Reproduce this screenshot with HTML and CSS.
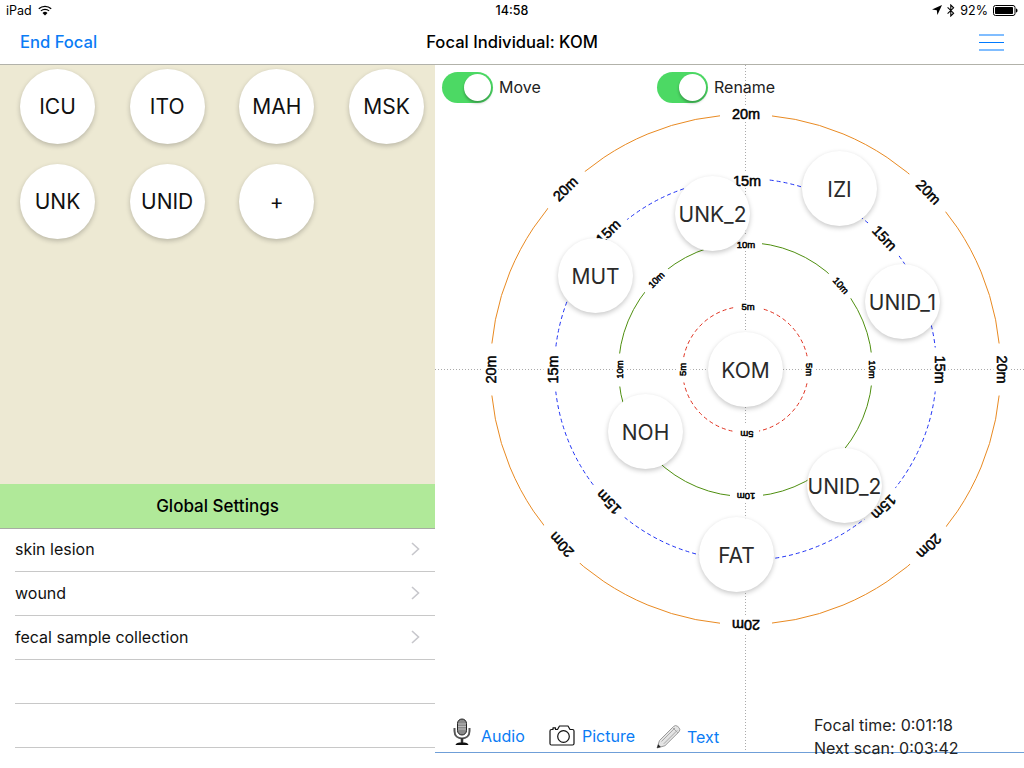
FILE: index.html
```html
<!DOCTYPE html>
<html>
<head>
  <title>Focal Individual</title>
  <meta charset="utf-8">
  <link rel="stylesheet" href="styles.css">
</head>
<body>
<div id="page">
  <!-- status bar -->
  <div class="statusbar">
    <div class="status-left">
      <span>iPad</span>
      <svg class="wifi" width="14" height="11" viewBox="0 0 14 11">
        <path d="M0.8 3.8 A9 9 0 0 1 13.2 3.8 M2.9 5.9 A6 6 0 0 1 11.1 5.9" fill="none" stroke="#000" stroke-width="1.300"/>
        <path d="M7 10.5 L4.500 7.900 A3.600 3.600 0 0 1 9.500 7.900 Z" fill="#000"/>
      </svg>
    </div>
    <div class="status-time">14:58</div>
    <div class="status-right">
      <svg width="10" height="10" viewBox="0 0 10 10"><path d="M10 0 L0 4.6 L4.8 5.2 L5.4 10 Z" fill="#000"/></svg>
      <svg width="8" height="13" viewBox="0 0 8 13"><path d="M0.6 3.4 L6.6 9.2 L3.8 12 L3.8 1 L6.6 3.8 L0.6 9.6" fill="none" stroke="#000" stroke-width="1.1"/></svg>
      <span>92%</span>
      <svg width="25" height="11" viewBox="0 0 25 11">
        <rect x="0.5" y="0.5" width="21.5" height="10" rx="2" fill="none" stroke="#000"/>
        <rect x="2" y="2" width="18" height="7" rx="0.8" fill="#000"/>
        <path d="M23 3.6 C24.2 3.8 24.5 4.6 24.5 5.5 C24.5 6.4 24.2 7.2 23 7.4 Z" fill="#000"/>
      </svg>
    </div>
  </div>

  <!-- nav bar -->
  <div class="navbar">
    <a class="nav-back">End Focal</a>
    <div class="nav-title">Focal Individual: KOM</div>
    <div class="hamburger"><i class="bar-light"></i><i class="bar-mid"></i><i class="bar-light"></i></div>
  </div>

  <div class="main">
    <div class="left">
      <div class="roster">
        <div class="bubble">ICU</div>
        <div class="bubble">ITO</div>
        <div class="bubble">MAH</div>
        <div class="bubble">MSK</div>
        <div class="bubble">UNK</div>
        <div class="bubble">UNID</div>
        <div class="bubble">+</div>
      </div>
      <div class="settings-head">Global Settings</div>
      <div class="settings-list">
        <div class="row"><span>skin lesion</span><svg class="chev" width="9" height="14" viewBox="0 0 9 14"><path d="M1 1 L7.5 7 L1 13" fill="none" stroke="#c7c7cc" stroke-width="1.6"/></svg></div>
        <div class="row"><span>wound</span><svg class="chev" width="9" height="14" viewBox="0 0 9 14"><path d="M1 1 L7.5 7 L1 13" fill="none" stroke="#c7c7cc" stroke-width="1.6"/></svg></div>
        <div class="row"><span>fecal sample collection</span><svg class="chev" width="9" height="14" viewBox="0 0 9 14"><path d="M1 1 L7.5 7 L1 13" fill="none" stroke="#c7c7cc" stroke-width="1.6"/></svg></div>
        <div class="row"></div>
        <div class="row"></div>
      </div>
    </div>

    <div class="right">
      <!-- distance rings -->
      <svg class="rings" width="589" height="687" viewBox="435 65 589 687">
        <line class="axis" x1="435" y1="369.5" x2="1024" y2="369.5"/>
        <line class="axis" x1="745.5" y1="65" x2="745.5" y2="752"/>

        <circle class="ring r20" cx="745.5" cy="369.5" r="255"/>
        <circle class="ring r15" cx="745.5" cy="369.5" r="191"/>
        <circle class="ring r10" cx="745.5" cy="369.5" r="127"/>
        <circle class="ring r5" cx="745.5" cy="369.5" r="63"/>

        <g class="tick big">
          <g transform="rotate(0 746 369.5)"><rect x="720" y="106" width="52" height="16"/><text x="746" y="119">20m</text></g>
          <g transform="rotate(45.800 746 369.5)"><rect x="720" y="106" width="52" height="16"/><text x="746" y="120">20m</text></g>
          <g transform="rotate(90 746 369.5)"><rect x="720" y="106" width="52" height="16"/><text x="746" y="119">20m</text></g>
          <g transform="rotate(134 746 369.5)"><rect x="720" y="106" width="52" height="16"/><text x="746" y="120">20m</text></g>
          <g transform="rotate(180 746 369.5)"><rect x="720" y="106" width="52" height="16"/><text x="746" y="119">20m</text></g>
          <g transform="rotate(226.500 746 369.5)"><rect x="720" y="106" width="52" height="16"/><text x="746" y="120">20m</text></g>
          <g transform="rotate(270 746 369.5)"><rect x="720" y="106" width="52" height="16"/><text x="746" y="119">20m</text></g>
          <g transform="rotate(315 746 369.5)"><rect x="720" y="106" width="52" height="16"/><text x="746" y="119">20m</text></g>
        </g>
        <g class="tick big">
          <g transform="rotate(0 746 369.5)"><rect x="724" y="171" width="44" height="16"/><text x="747" y="186">15m</text></g>
          <g transform="rotate(46.500 746 369.5)"><rect x="724" y="169" width="44" height="16"/><text x="746" y="183.500">15m</text></g>
          <g transform="rotate(90 746 369.5)"><rect x="724" y="167" width="44" height="16"/><text x="746" y="180.500">15m</text></g>
          <g transform="rotate(135 746 369.5)"><rect x="724" y="167" width="44" height="16"/></g>
          <g transform="rotate(226 746 369.5)"><rect x="724" y="169" width="44" height="16"/><text x="746" y="183.500">15m</text></g>
          <g transform="rotate(270 746 369.5)"><rect x="724" y="167" width="44" height="16"/><text x="746" y="181.500">15m</text></g>
          <g transform="rotate(315 746 369.5)"><rect x="724" y="166" width="44" height="16"/><text x="746" y="179.500">15m</text></g>
        </g>
        <g class="tick small">
          <g transform="rotate(0 746 369.5)"><rect x="729" y="236" width="33" height="14"/><text x="746" y="247.500">10m</text></g>
          <g transform="rotate(48.500 746 369.5)"><rect x="729" y="236" width="33" height="14"/><text x="746" y="246">10m</text></g>
          <g transform="rotate(90 746 369.5)"><rect x="729" y="236" width="33" height="14"/><text x="746" y="247">10m</text></g>
          <g transform="rotate(180 746 369.5)"><rect x="729" y="236" width="33" height="14"/><text x="746" y="246">10m</text></g>
          <g transform="rotate(270 746 369.5)"><rect x="729" y="236" width="33" height="14"/><text x="746" y="246">10m</text></g>
          <g transform="rotate(315 746 369.5)"><rect x="729" y="236" width="33" height="14"/><text x="746" y="246">10m</text></g>
        </g>
        <g class="tick small">
          <g transform="rotate(0 746 369.5)"><rect x="736" y="300" width="25" height="14"/><text x="748" y="310">5m</text></g>
          <g transform="rotate(90 746 369.5)"><rect x="733" y="300" width="25" height="14"/><text x="746" y="310">5m</text></g>
          <g transform="rotate(180 746 369.5)"><rect x="733" y="300" width="25" height="14"/><text x="745" y="308.500">5m</text></g>
          <g transform="rotate(270 746 369.5)"><rect x="733" y="300" width="25" height="14"/><text x="746" y="309">5m</text></g>
        </g>
      </svg>

      <!-- individuals on the rings -->
      <div class="bubble placed at-kom">KOM</div>
      <div class="bubble placed at-unk2">UNK_2</div>
      <div class="bubble placed at-izi">IZI</div>
      <div class="bubble placed at-unid1">UNID_1</div>
      <div class="bubble placed at-mut">MUT</div>
      <div class="bubble placed at-noh">NOH</div>
      <div class="bubble placed at-unid2">UNID_2</div>
      <div class="bubble placed at-fat">FAT</div>

      <!-- this one label sits over the UNID_2 bubble -->
      <svg class="rings" width="589" height="687" viewBox="435 65 589 687">
        <g class="tick big">
          <g transform="rotate(135 746 369.5)"><text x="746" y="179.500">15m</text></g>
        </g>
      </svg>

      <div class="switches">
        <div class="switch-item switch-move"><div class="switch"><i></i></div><span>Move</span></div>
        <div class="switch-item"><div class="switch"><i></i></div><span>Rename</span></div>
      </div>

      <div class="bottom">
        <div class="tools">
          <div class="tool tool-audio">
            <svg width="20" height="28" viewBox="0 0 20 28">
              <rect x="5.500" y="1" width="9" height="16" rx="4.500" fill="#8a8a8a" stroke="#222" stroke-width="1"/>
              <path d="M6 6 H14 M6 8.500 H14 M6 11 H14" stroke="#c8c8c8" stroke-width="0.8"/>
              <path d="M2.500 10 V13 C2.500 18 6 20.500 10 20.500 C14 20.500 17.500 18 17.500 13 V10" fill="none" stroke="#555" stroke-width="2"/>
              <path d="M10 20 V25" stroke="#333" stroke-width="2.500"/>
              <path d="M3.500 27 C4 25 6 24.500 10 24.500 C14 24.500 16 25 16.500 27 Z" fill="#111"/>
            </svg>
            <a>Audio</a>
          </div>
          <div class="tool tool-picture">
            <svg width="26" height="21" viewBox="0 0 26 21">
              <path d="M2.500 4.500 H4 V2.800 H6.500 V4.500 H8.500 L10.500 1 H19 L21 4.500 H23.500 Q25 4.500 25 6 V18.500 Q25 20 23.500 20 H2.500 Q1 20 1 18.500 V6 Q1 4.500 2.500 4.500 Z" fill="#fff" stroke="#111" stroke-width="1.200" stroke-linejoin="round"/>
              <circle cx="14.500" cy="11.500" r="5.800" fill="#fff" stroke="#111" stroke-width="1.200"/>
            </svg>
            <a>Picture</a>
          </div>
          <div class="tool tool-text">
            <svg width="25" height="25" viewBox="0 0 25 25">
              <path d="M1 24 L3.500 16.500 L17.500 2.500 Q19.500 0.500 21.800 2.500 L23 3.700 Q24.800 5.800 23 7.800 L9 21.700 Z" fill="#e4e4e4" stroke="#9a9a9a" stroke-width="1"/>
              <path d="M5.500 17.500 L19 4 M7.800 19.800 L21.300 6.300 M16.500 3.500 L22 9" fill="none" stroke="#a8a8a8" stroke-width="1"/>
              <path d="M1 24 L2.200 20.300 L4.800 22.900 Z" fill="#222"/>
            </svg>
            <a>Text</a>
          </div>
        </div>
        <div class="timers">
          <div>Focal time: 0:01:18</div>
          <div>Next scan: 0:03:42</div>
        </div>
      </div>
    </div>
  </div>
</div>
</body>
</html>
```

FILE: styles.css
```css
html, body {
  margin: 0;
  padding: 0;
}

body {
  background: #fff;
  color: #000;
  font-family: "Inter", "Liberation Sans", sans-serif;
}

a {
  color: #0a7cf5;
}

#page {
  width: 1024px;
  height: 768px;
  display: flex;
  flex-direction: column;
  overflow: hidden;
}

/* status bar */
.statusbar {
  height: 20px;
  display: grid;
  grid-template-columns: 1fr auto 1fr;
  align-items: center;
  padding: 0 6px;
  font-size: 12.500px;
}

.status-left {
  display: flex;
  align-items: center;
  gap: 6px;
}

.status-time {
  font-weight: 500;
}

.status-right {
  display: flex;
  align-items: center;
  justify-content: flex-end;
  gap: 5px;
}

/* nav bar */
.navbar {
  height: 44px;
  border-bottom: 1px solid #b2b2aa;
  display: grid;
  grid-template-columns: 1fr auto 1fr;
  align-items: center;
  padding: 0 20px;
}

.nav-back {
  font-size: 16.600px;
  font-weight: 500;
}

.nav-title {
  font-size: 16.600px;
  font-weight: 500;
}

.hamburger {
  justify-self: end;
  width: 25px;
  display: flex;
  flex-direction: column;
  gap: 6px;
  align-items: stretch;
}

.hamburger i {
  display: block;
}

.bar-light {
  height: 2px;
  background: #80bdff;
}

.bar-mid {
  height: 1px;
  background: #007aff;
}

/* main columns */
.main {
  flex: 1;
  display: flex;
  min-height: 0;
}

.left {
  width: 435px;
  display: flex;
  flex-direction: column;
}

.roster {
  height: 419px;
  box-sizing: border-box;
  background: #ede9d3;
  padding: 4px 11px 0 20px;
  display: grid;
  grid-template-columns: repeat(4, 75px);
  grid-auto-rows: 75px;
  justify-content: space-between;
  row-gap: 20px;
  align-content: start;
}

.bubble {
  width: 75px;
  height: 75px;
  box-sizing: border-box;
  border-radius: 50%;
  background: #fff;
  box-shadow: 0 2px 5px rgba(0, 0, 0, 0.22);
  display: flex;
  align-items: center;
  justify-content: center;
  font-size: 21px;
  color: #111;
}

.settings-head {
  height: 44px;
  background: #b0e999;
  border-bottom: 1px solid #a8aca4;
  display: flex;
  align-items: center;
  justify-content: center;
  font-size: 17px;
  font-weight: 500;
}

.settings-list {
  padding-left: 15px;
  margin-top: -1px;
}

.row {
  height: 44px;
  box-sizing: border-box;
  border-bottom: 1px solid #c8c8c8;
  display: flex;
  align-items: center;
  justify-content: space-between;
  padding: 0 15px 2px 0;
  font-size: 16px;
  color: #111;
}

/* right side */
.right {
  flex: 1;
  position: relative;
  display: flex;
  flex-direction: column;
  justify-content: space-between;
}

.rings {
  position: absolute;
  left: 0;
  top: 0;
}

.axis {
  stroke: #aaa;
  stroke-width: 1;
  stroke-dasharray: 1 2;
}

.ring {
  fill: none;
  stroke-width: 1;
}

.r20 {
  stroke: #e98a22;
}

.r15 {
  stroke: #1f32f5;
  stroke-dasharray: 4 3;
}

.r10 {
  stroke: #4f8f10;
}

.r5 {
  stroke: #e0301e;
  stroke-dasharray: 4 3;
}

.tick rect {
  fill: #fff;
}

.tick text {
  font-family: "Liberation Sans", sans-serif;
  text-anchor: middle;
  fill: #000;
  stroke: #000;
  stroke-width: 0.5;
}

.big text {
  font-size: 14.500px;
}

.small text {
  font-size: 9.500px;
}

.placed {
  position: absolute;
  padding-top: 2px;
  color: #2a2a2a;
}

.at-kom { left: 273px; top: 267px; }
.at-unk2 { left: 240px; top: 111px; }
.at-izi { left: 367px; top: 86px; }
.at-unid1 { left: 430px; top: 199px; }
.at-mut { left: 123px; top: 173px; }
.at-noh { left: 173px; top: 329px; }
.at-unid2 { left: 372px; top: 383px; }
.at-fat { left: 264px; top: 452px; }

.switches {
  position: relative;
  display: flex;
  padding: 7px 0 0 7px;
}

.switch-item {
  display: flex;
  align-items: center;
  gap: 6px;
  font-size: 16px;
  line-height: 29px;
  color: #222;
}

.switch-move {
  width: 215px;
}

.switch {
  width: 51px;
  height: 31px;
  border-radius: 16px;
  background: #4cd964;
  position: relative;
}

.switch i {
  position: absolute;
  right: 2px;
  top: 2px;
  width: 27px;
  height: 27px;
  border-radius: 50%;
  background: #fff;
  box-shadow: 0 2px 3px rgba(0, 0, 0, 0.3);
}

.bottom {
  position: relative;
  height: 52px;
  box-sizing: border-box;
  border-bottom: 1px solid #6f9fd8;
  margin-bottom: 15px;
  display: flex;
  justify-content: space-between;
}

.tools {
  display: flex;
  align-items: flex-start;
  padding: 17px 0 0 17px;
  font-size: 16px;
}

.tool {
  display: flex;
  align-items: center;
  gap: 9px;
}

.tool-audio {
  width: 97px;
}

.tool-audio a {
  padding-top: 8px;
}

.tool-picture {
  width: 107px;
  padding-top: 7px;
  gap: 7px;
}

.tool-text {
  padding-top: 6px;
  gap: 6px;
}

.timers {
  width: 210px;
  font-size: 16px;
  line-height: 23px;
  color: #222;
  padding-top: 13px;
  white-space: nowrap;
}
```
